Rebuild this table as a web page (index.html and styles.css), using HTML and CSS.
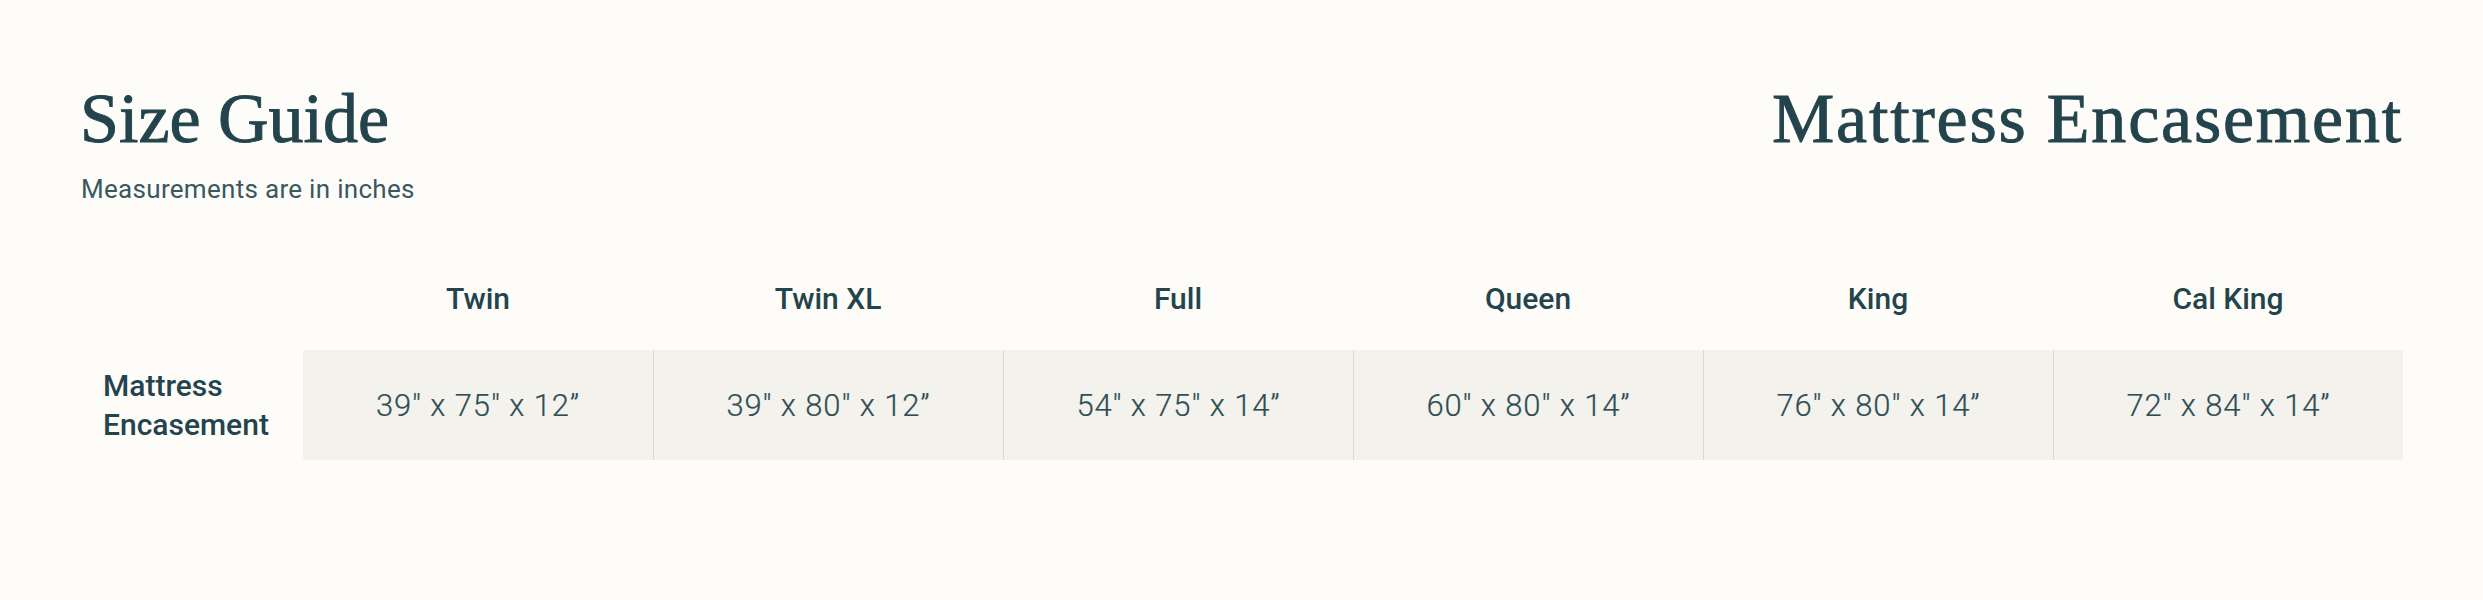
FILE: index.html
```html
<!DOCTYPE html>
<html lang="en">
<head>
<meta charset="utf-8">
<title>Size Guide</title>
<link rel="stylesheet" href="styles.css">
</head>
<body>
<main class="page">
  <header class="top">
    <div class="intro">
      <h1 class="title">Size Guide</h1>
      <p class="subtitle">Measurements are in inches</p>
    </div>
    <h2 class="title product">Mattress Encasement</h2>
  </header>
  <div class="table">
    <div class="corner"></div>
    <div class="head">Twin</div>
    <div class="head">Twin XL</div>
    <div class="head">Full</div>
    <div class="head">Queen</div>
    <div class="head">King</div>
    <div class="head">Cal King</div>
    <div class="rowlabel">Mattress<br>Encasement</div>
    <div class="cell">39" x 75" x 12”</div>
    <div class="cell">39" x 80" x 12”</div>
    <div class="cell">54" x 75" x 14”</div>
    <div class="cell">60" x 80" x 14”</div>
    <div class="cell">76" x 80" x 14”</div>
    <div class="cell">72" x 84" x 14”</div>
  </div>
</main>
</body>
</html>
```

FILE: styles.css
```css
html, body {
  margin: 0;
  padding: 0;
  background: #fdfcf8;
}

body {
  color: #23444c;
  font-family: Roboto, "Liberation Sans", sans-serif;
}

.page {
  padding: 84px 80px 0 80px;
}

.top {
  display: flex;
  justify-content: space-between;
  align-items: flex-start;
}

.title {
  margin: 0;
  font-family: "Liberation Serif", serif;
  font-weight: 400;
  font-size: 70px;
  line-height: 70px;
  color: #23444c;
  -webkit-text-stroke: 0.9px #23444c;
}

.product {
  letter-spacing: 1.8px;
}

.subtitle {
  margin: 22px 0 0 1px;
  font-size: 26px;
  line-height: 26px;
  font-weight: 400;
  letter-spacing: 0.3px;
  color: #3a585f;
}

.table {
  margin-top: 80px;
  display: grid;
  grid-template-columns: 223px repeat(6, 1fr);
}

.head {
  box-sizing: border-box;
  display: flex;
  align-items: center;
  justify-content: center;
  height: 68px;
  padding-bottom: 36px;
  font-size: 30px;
  font-weight: 500;
}

.rowlabel {
  display: flex;
  align-items: center;
  padding-left: 23px;
  font-size: 30px;
  line-height: 39px;
  font-weight: 500;
}

.cell {
  display: flex;
  align-items: center;
  justify-content: center;
  height: 110px;
  background: #f4f2ec;
  border-left: 1px solid #dcd8cd;
  font-size: 31px;
  font-weight: 300;
  letter-spacing: 0.9px;
  color: #2f4e55;
  -webkit-text-stroke: 0.2px #2f4e55;
}

.rowlabel + .cell {
  border-left: none;
}
```
